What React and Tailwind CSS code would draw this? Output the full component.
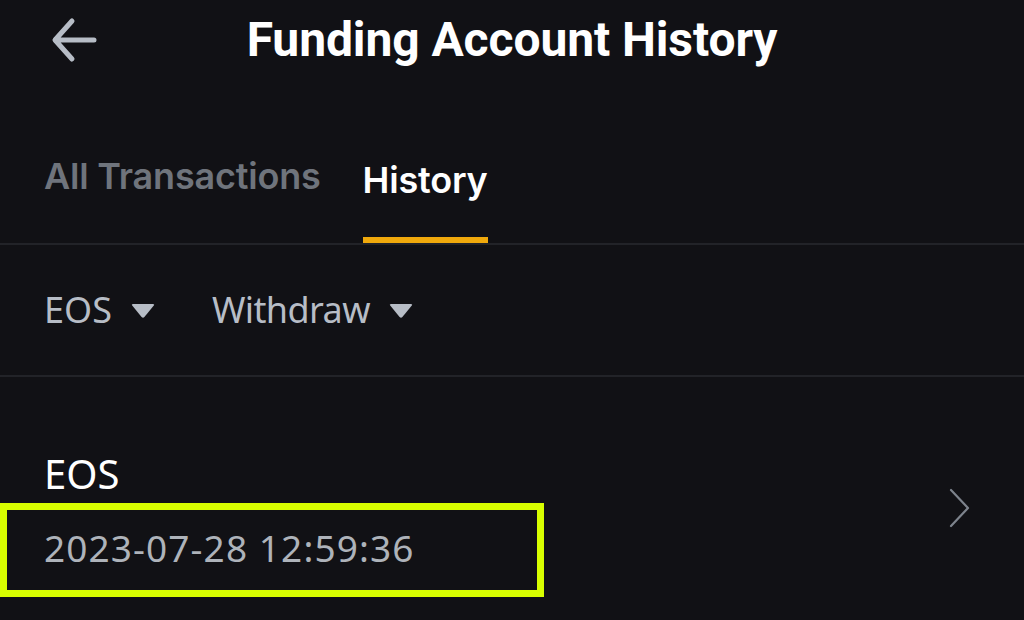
import React from "react";

function Caret() {
  return (
    <svg width="26" height="17" viewBox="0 0 26 17" className="shrink-0">
      <path d="M3 2 H23 Q25 2 23.6 3.8 L14.4 15 Q13 16.6 11.6 15 L2.4 3.8 Q1 2 3 2 Z" fill="#b7bdc6" />
    </svg>
  );
}

export default function App() {
  return (
    <div
      className="w-[1024px] h-[620px] overflow-hidden bg-[#111115] text-white"
      style={{ fontFamily: "Roboto, 'Noto Sans', sans-serif" }}
    >
      {/* header */}
      <div className="relative h-[84px] flex items-center justify-center">
        <svg
          width="48"
          height="48"
          viewBox="0 0 48 48"
          className="absolute left-[50px] top-[16px]"
          fill="none"
          stroke="#b7bdc6"
          strokeWidth="5"
          strokeLinecap="round"
          strokeLinejoin="round"
        >
          <path d="M44 24 H6 M22 5 L5 24 L22 43" />
        </svg>
        <h1 className="text-[48px] font-bold tracking-[-0.1px] leading-none pb-1">Funding Account History</h1>
      </div>

      {/* tabs */}
      <div
        className="h-[161px] flex items-end gap-[42px] px-[44px] border-b-2 border-[#222328]"
        style={{ fontFamily: "Inter, 'Noto Sans', sans-serif" }}
      >
        <div className="pb-[40px] text-[36px] font-semibold text-[#6f747c] tracking-[-0.2px]">All Transactions</div>
        <div className="flex flex-col items-center">
          <div className="pb-[30px] text-[36px] font-semibold text-white tracking-[-0.2px]">History</div>
          <div className="h-[6px] w-[125px] bg-[#f0a90c]" />
        </div>
      </div>

      {/* filters */}
      <div
        className="h-[132px] flex items-center px-[44px] border-b-2 border-[#222328] text-[36px] text-[#b7bdc6]"
        style={{ fontFamily: "'Noto Sans', sans-serif" }}
      >
        <div className="flex items-center gap-[18px]">
          <span>EOS</span>
          <Caret />
        </div>
        <div className="flex items-center gap-[18px] ml-[56px]">
          <span className="tracking-[-0.6px]">Withdraw</span>
          <Caret />
        </div>
      </div>

      {/* list item */}
      <div className="flex items-center justify-between pr-[52px]" style={{ fontFamily: "'Noto Sans', sans-serif" }}>
        <div className="flex flex-col">
          <div className="pl-[44px] pt-[77px] text-[40px] leading-none text-white">EOS</div>
          <div className="mt-[9px] w-[544px] h-[94px] border-[7px] border-[#d8ff00] flex items-center pl-[37px]">
            <span className="text-[37px] text-[#aeb3ba] tracking-[1.1px] pb-1">2023-07-28 12:59:36</span>
          </div>
        </div>
        <svg
          width="24"
          height="40"
          viewBox="0 0 24 40"
          fill="none"
          stroke="#7d838c"
          strokeWidth="2.2"
          strokeLinecap="round"
          strokeLinejoin="round"
          className="mt-[42px]"
        >
          <path d="M3 2 L20 20 L3 38" />
        </svg>
      </div>
    </div>
  );
}
